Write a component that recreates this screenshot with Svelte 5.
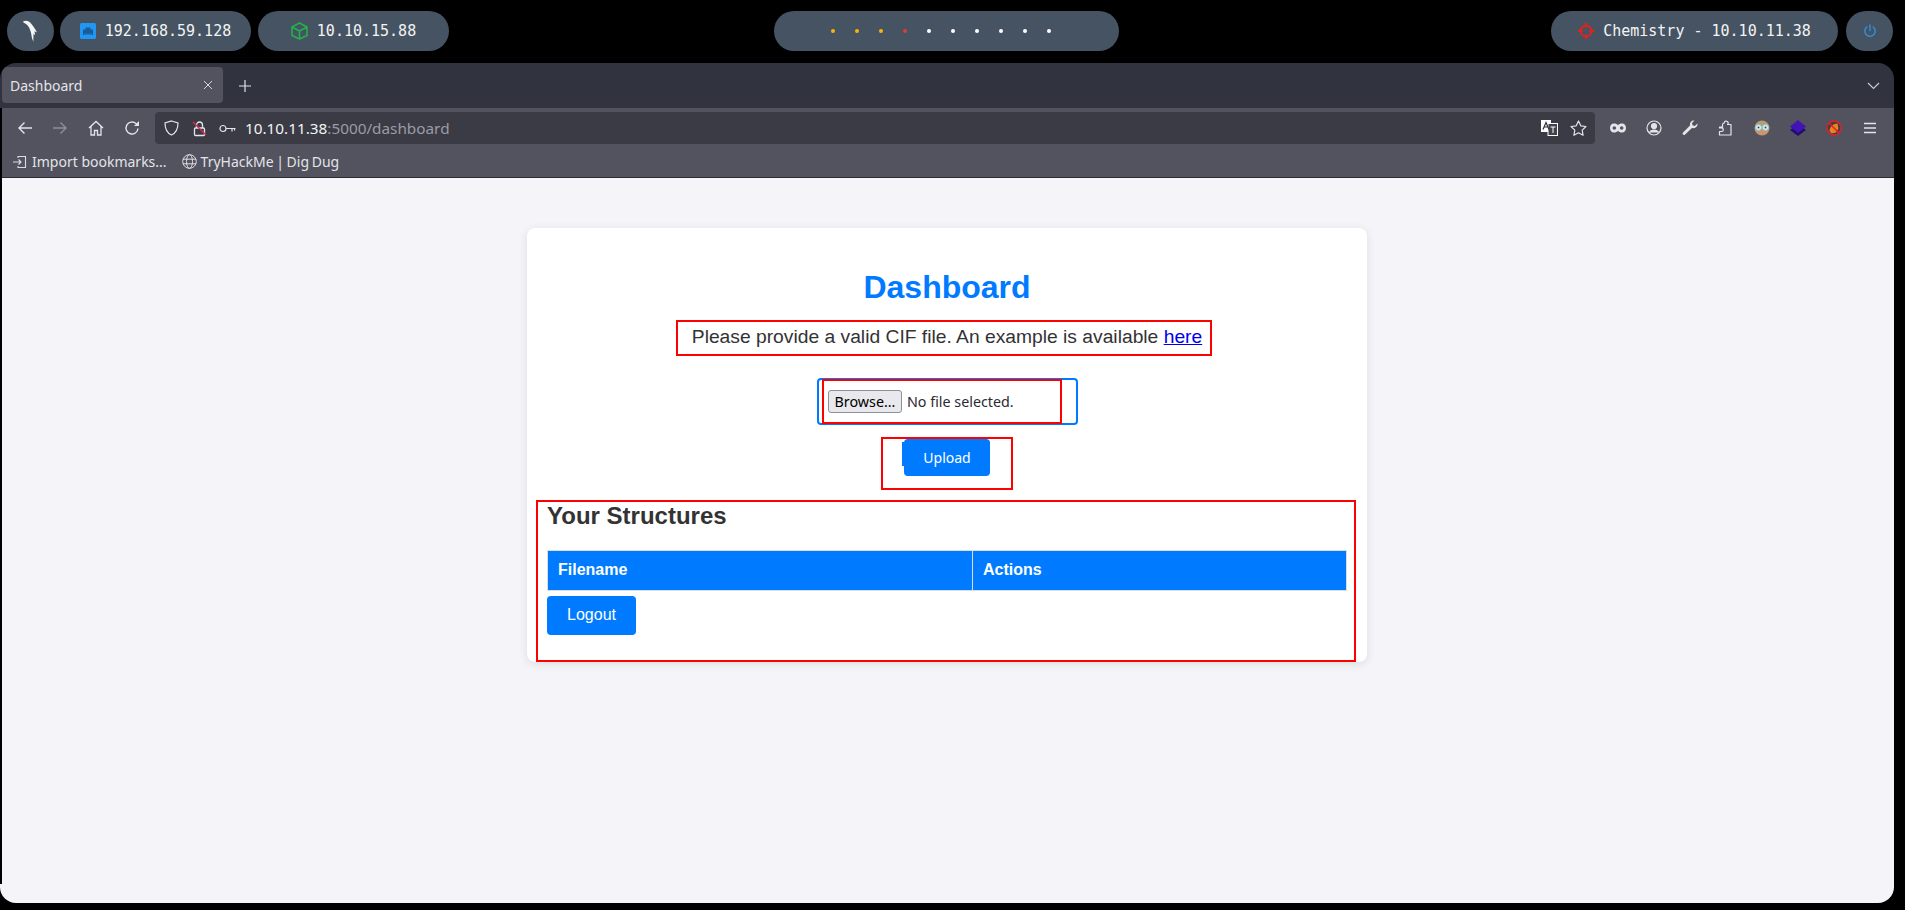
<script>
	const dots = ['#f5b800', '#f5b800', '#f5b800', '#e53935', '#fff', '#fff', '#fff', '#fff', '#fff', '#fff'];
</script>

<div class="desktop">
	<div class="topbar">
		<div class="group">
			<div class="pill logo">
				<svg width="18" height="24" viewBox="0 0 18 24"><path d="M1 2.500C4 .8 7.500 2 9.500 5c1.800 2.700 4.500 6 5.500 8.500l-2.500-1.200.5 4-1.500-1.500-.2 8-1.300-3.500-1-5.500C8 10 6.500 6.500 4 5 3 4.400 1.500 4 1 2.500z" fill="#f4f5f6" /></svg>
			</div>
			<div class="pill ip">
				<svg width="16" height="16" viewBox="0 0 16 16"><rect width="16" height="16" rx="1.500" fill="#2196f3" /><path d="M3 12V6.500h2.500V4.500h5v2H13V12z" fill="#1a5a96" /><path d="M4.500 10.500h1v1.500h-1zM6.500 10.500h1v1.500h-1zM8.500 10.500h1v1.500h-1zM10.500 10.500h1v1.500h-1z" fill="#2196f3" /></svg>
				<span>192.168.59.128</span>
			</div>
			<div class="pill ip">
				<svg width="17" height="18" viewBox="0 0 17 18" fill="none" stroke="#22b14c" stroke-width="1.600" stroke-linejoin="round"><path d="M8.500 1 16 5v8.500L8.500 17 1 13.500V5zM1 5l7.500 4L16 5M8.500 9v8" /></svg>
				<span>10.10.15.88</span>
			</div>
		</div>
		<div class="pill center">
			{#each dots as color}
				<i class="dot" style="background:{color}"></i>
			{/each}
		</div>
		<div class="group">
			<div class="pill target">
				<svg width="16" height="16" viewBox="0 0 16 16" fill="none" stroke="#e8201a" stroke-width="1.800"><circle cx="8" cy="8" r="5.500" /><path d="M8 0v4.500M8 11.500V16M0 8h4.500M11.500 8H16" /></svg>
				<span>Chemistry - 10.10.11.38</span>
			</div>
			<div class="pill power">
				<svg width="14" height="14" viewBox="0 0 14 14" fill="none" stroke="#2f95e8" stroke-width="1.300" stroke-linecap="round"><path d="M7 1v5.500M3.800 3a5.200 5.200 0 1 0 6.400 0" /></svg>
			</div>
		</div>
	</div>

	<div class="browser">
		<div class="tabs">
			<div class="tab">
				<span>Dashboard</span>
				<svg width="10" height="10" viewBox="0 0 10 10" stroke="#d5d6db" stroke-width="1"><path d="M1 1l8 8M9 1l-8 8" /></svg>
			</div>
			<svg class="newtab" width="12" height="12" viewBox="0 0 12 12" stroke="#e2e3e7" stroke-width="1.200"><path d="M6 0v12M0 6h12" /></svg>
			<svg class="chev" width="13" height="8" viewBox="0 0 13 8" fill="none" stroke="#c8c9d0" stroke-width="1.200"><path d="M1 1l5.500 5.500L12 1" /></svg>
		</div>

		<div class="nav">
			<svg class="ic" viewBox="0 0 16 16" fill="none" stroke="#e4e5e9" stroke-width="1.400"><path d="M15 8H2M7.500 2.500 2 8l5.500 5.500" /></svg>
			<svg class="ic" viewBox="0 0 16 16" fill="none" stroke="#8d8e98" stroke-width="1.400"><path d="M1 8h13M8.500 2.500 14 8l-5.500 5.500" /></svg>
			<svg class="ic" viewBox="0 0 16 16" fill="none" stroke="#e4e5e9" stroke-width="1.300"><path d="M1 8l7-6.500L15 8M3 6.500V15h3.500v-4.500h3V15H13V6.500" /></svg>
			<svg class="ic" viewBox="0 0 16 16" fill="none" stroke="#e4e5e9" stroke-width="1.400"><path d="M14 8.500A6 6 0 1 1 12 3.500L14.500 5.500" /><path d="M15 1v5h-5" fill="#e4e5e9" stroke="none" /></svg>
			<div class="urlbar">
				<svg width="15" height="16" viewBox="0 0 15 16" fill="none" stroke="#e4e5e9" stroke-width="1.200"><path d="M7.500 1 14 3c0 6-2 10-6.500 12C3 13 1 9 1 3z" /></svg>
				<svg class="u2" width="15" height="17" viewBox="0 0 15 17" fill="none"><path d="M4.500 8V5a3 3 0 0 1 6 0v3" stroke="#e4e5e9" stroke-width="1.300" /><rect x="2.500" y="8" width="10" height="7.500" rx="1" stroke="#e4e5e9" stroke-width="1.300" /><path d="M1 2l13 13" stroke="#e22850" stroke-width="1.300" /></svg>
				<svg class="u3" width="17" height="9" viewBox="0 0 17 9" fill="none" stroke="#e4e5e9" stroke-width="1.200"><circle cx="4" cy="4.500" r="3" /><path d="M7 4.500h9.500M13 4.500v3M15.500 4.500v2" /></svg>
				<span class="url"><b>10.10.11.38</b>:5000/dashboard</span>
				<svg class="u4" width="17" height="16" viewBox="0 0 17 16"><rect x="0" y="0" width="10" height="12" fill="#fff" /><rect x="7" y="3.500" width="9.500" height="12" fill="#42434d" stroke="#fff" stroke-width="1" /><path d="M2 9.500 5 2.500l3 7M3.200 7h3.600" fill="none" stroke="#33343c" stroke-width="1.200" /><path d="M9.500 7h5M12 7v6" stroke="#fff" stroke-width="1" /></svg>
				<svg class="u5" width="17" height="16" viewBox="0 0 17 16" fill="none" stroke="#e4e5e9" stroke-width="1.200" stroke-linejoin="round"><path d="M8.500 1l2.300 4.800 5.200.7-3.800 3.600.9 5.200-4.600-2.500-4.600 2.500.9-5.200L1 6.500l5.200-.7z" /></svg>
			</div>
			<div class="exts">
				<svg class="ic" viewBox="0 0 16 16"><path d="M4 3.500c1.800 0 3 .7 4 1.500 1-.8 2.200-1.500 4-1.500 2.500 0 4 2 4 4.500s-1.500 4.500-4 4.500c-1.800 0-3-.7-4-1.500-1 .8-2.200 1.500-4 1.500-2.500 0-4-2-4-4.500s1.500-4.500 4-4.500z" fill="#e4e5e9" /><circle cx="4.300" cy="8" r="1.800" fill="#52535e" /><circle cx="11.700" cy="8" r="1.800" fill="#52535e" /></svg>
				<svg class="ic" viewBox="0 0 16 16" fill="none" stroke="#e4e5e9" stroke-width="1.200"><circle cx="8" cy="8" r="7" /><circle cx="8" cy="6" r="2.500" fill="#e4e5e9" /><path d="M3.500 12.500c1-2 3-2.500 4.500-2.500s3.500.5 4.500 2.500" fill="#e4e5e9" /></svg>
				<svg class="ic" viewBox="0 0 16 16" fill="#e4e5e9"><path d="M15.500 3.500 12.800 6 10.500 5.300 10 3l2.500-2.500C9.500-.2 7.500 2.500 8 5.500L.8 12.800c-.8 1 .8 2.700 2 2L10 8c3 .8 6-1.500 5.500-4.500z" /></svg>
				<svg class="ic" viewBox="0 0 16 16" fill="none" stroke="#e4e5e9" stroke-width="1.200" stroke-linejoin="round"><path d="M1.500 7h3V4.500A1.800 1.800 0 0 1 6.300 3V3A1.800 1.800 0 0 1 8 1l.8.3A1.800 1.800 0 0 1 9.500 4.500h3.500V15H1.500v-3.500h2a1.800 1.800 0 0 0 0-3.600h-2z" /></svg>
				<svg class="ic" viewBox="0 0 16 16"><circle cx="8" cy="8" r="7.500" fill="#c9966e" /><path d="M1.500 5.500C3 1 13 1 14.500 5.500z" fill="#a8a27a" /><circle cx="4.500" cy="7.500" r="3" fill="#d9f0f2" stroke="#8fc7cf" /><circle cx="11.500" cy="7.500" r="3" fill="#d9f0f2" stroke="#8fc7cf" /><circle cx="4.500" cy="7.500" r="1" fill="#445" /><circle cx="11.500" cy="7.500" r="1" fill="#445" /></svg>
				<svg class="ic" viewBox="0 0 16 16"><path d="M8 4 16 10l-8 6-8-6z" fill="#1e0f70" /><path d="M8 0l8 6.500L8 13 0 6.500z" fill="#4314b4" /></svg>
				<svg class="ic" viewBox="0 0 16 16"><circle cx="8" cy="8" r="7" fill="#4a3a3e" stroke="#e02030" stroke-width="1.400" /><path d="M3.500 11c0-4 3-7 8-7.500l1 5-2.500 4-4.500 1z" fill="#e8831c" /><path d="M3 3l10 10" stroke="#e02030" stroke-width="1.400" /></svg>
				<svg class="ic" viewBox="0 0 16 16" stroke="#e4e5e9" stroke-width="1.300"><path d="M2 3.500h12M2 8h12M2 12.500h12" /></svg>
			</div>
		</div>

		<div class="bookmarks">
			<div class="bm">
				<svg width="14" height="14" viewBox="0 0 14 14" fill="none" stroke="#dcdde2" stroke-width="1.100"><path d="M5 3V1.500h7.500v11H5V11M0 7h8M5.500 4.500 8 7l-2.500 2.500" /></svg>
				<span>Import bookmarks...</span>
			</div>
			<div class="bm second">
				<svg width="15" height="15" viewBox="0 0 15 15" fill="none" stroke="#dcdde2" stroke-width="1"><circle cx="7.500" cy="7.500" r="6.800" /><ellipse cx="7.500" cy="7.500" rx="3" ry="6.800" /><path d="M1 5.200h13M1 9.800h13" /></svg>
				<span>TryHackMe | Dig Dug</span>
			</div>
		</div>

		<main class="page">
			<section class="card">
				<h1>Dashboard</h1>
				<p class="intro">Please provide a valid CIF file. An example is available <a href="#here">here</a></p>
				<form class="upload" onsubmit={(e) => e.preventDefault()}>
					<div class="file">
						<button type="button" class="browse">Browse...</button>
						<span>No file selected.</span>
					</div>
					<button class="primary small" type="submit">Upload</button>
				</form>
				<h2>Your Structures</h2>
				<table>
					<thead>
						<tr><th class="c1">Filename</th><th>Actions</th></tr>
					</thead>
				</table>
				<button class="primary logout" type="button">Logout</button>
				<span class="mark m1"></span>
				<span class="mark m2"></span>
				<span class="mark m3"></span>
				<span class="mark m4"></span>
				<span class="tick"></span>
			</section>
		</main>
	</div>
</div>

<style>
	:global(body) { background: #000; }
	.desktop {
		width: 1905px; height: 910px; background: #000; overflow: hidden;
		display: flex; flex-direction: column;
	}

	.topbar {
		display: flex; justify-content: space-between; align-items: center;
		height: 40px; margin: 11px 12px 12px 7px; flex: none;
	}
	.group { display: flex; gap: 6px; }
	.group:last-child { gap: 8px; }
	.pill {
		height: 40px; background: #465362; border-radius: 20px;
		display: flex; align-items: center; justify-content: center;
		color: #f2f3f4;
		font-family: "DejaVu Sans Mono", monospace; font-size: 15px;
	}
	.logo { width: 47px; }
	.ip { width: 191px; gap: 9px; }
	.ip + .ip { margin-left: 1px; }
	.center { width: 345px; gap: 20px; position: absolute; left: 774px; top: 11px; padding-right: 11px; box-sizing: border-box; }
	.dot { width: 4px; height: 4px; border-radius: 50%; }
	.target { width: 287px; gap: 9px; }
	.power { width: 47px; }

	.browser {
		flex: 1; margin: 0 11px 7px 0;
		border-radius: 16px; overflow: hidden;
		display: flex; flex-direction: column;
		background: #000;
	}
	.tabs {
		height: 45px; background: #31343f; flex: none;
		display: flex; align-items: center; padding-left: 2px;
	}
	.tab {
		width: 221px; height: 36px; box-sizing: border-box; background: #52535e;
		border-radius: 4px; margin-bottom: 1px;
		display: flex; align-items: center; justify-content: space-between;
		padding: 0 10px 0 8px;
		color: #e3e4e8; font-family: "Noto Sans", sans-serif; font-size: 14px;
	}
	.newtab { margin: 0 0 0 16px; }
	.chev { margin: 0 14px 0 auto; }

	.nav {
		height: 40px; flex: none; padding-left: 14.500px;
		display: flex; align-items: center; margin-left: 2px;
		background: #52535e;
	}
	.ic { width: 16px; height: 16px; flex: none; margin-right: 19.800px; }
	.urlbar {
		width: 1440px; height: 32px; margin-left: -4.700px; flex: none;
		background: #3a3b45; border-radius: 4px;
		display: flex; align-items: center; padding: 0 8px 0 9px; box-sizing: border-box;
	}
	.u2 { margin-left: 12.500px; }
	.u3 { margin-left: 12.500px; }
	.url {
		margin-left: 9px; color: #9b9ca4;
		font-family: "Noto Sans", sans-serif; font-size: 15.300px;
	}
	.url b { font-weight: 400; color: #f2f3f5; }
	.u4 { margin-left: auto; }
	.u5 { margin-left: 12px; }
	.exts { display: flex; align-items: center; margin-left: 15px; }
	.exts .ic { margin-right: 20px; }

	.bookmarks {
		height: 30px; flex: none; display: flex; align-items: center;
		padding: 0 0 2px 11px; box-sizing: border-box; margin-left: 2px;
		background: #52535e; border-bottom: 1px solid #2a2b33;
		color: #e3e4e8; font-family: "Noto Sans", sans-serif; font-size: 14px;
	}
	.bm { display: flex; align-items: center; gap: 5px; }
	.second { gap: 4px; margin-left: 15px; word-spacing: -1px; }

	.page {
		position: relative; flex: 1; background: #f4f4f9;
		display: flex; justify-content: center; align-items: flex-start;
		padding-top: 50px; font-family: "Liberation Sans", Arial, sans-serif;
		color: #333;
	}
	.page::before {
		content: ""; position: absolute; left: 0; top: 0; bottom: 19px; width: 2px; background: #000;
	}
	.card {
		position: relative; width: 840px; height: 434px; box-sizing: border-box;
		padding: 20px 20px;
		background: #fff; border-radius: 8px;
		box-shadow: 0 2px 10px rgba(0, 0, 0, 0.1);
		text-align: center;
	}
	h1 {
		margin: 21px 0 0; font-size: 32px; line-height: 37px; color: #007bff; font-weight: 700;
	}
	.intro { margin: 20px 0 0; font-size: 19.250px; line-height: 22px; }
	.intro a { color: #0000ee; }

	.upload { display: flex; flex-direction: column; align-items: center; margin-top: 30px; }
	.file {
		width: 261px; height: 47px; box-sizing: border-box;
		border: 2px solid #007bff; border-radius: 4px;
		display: flex; align-items: center; gap: 5px; padding-left: 9px; margin-left: 1px;
		color: #2b2a33;
		font-family: "Noto Sans", sans-serif; font-size: 14.300px;
	}
	.browse {
		width: 74px; height: 23px; padding: 0; background: #e9e9ed;
		border: 1px solid #8f8f9d; border-radius: 3px; color: #000;
		font: inherit;
	}
	.primary {
		background: #007bff; color: #fff; border: 0; border-radius: 4px;
	}
	.small {
		width: 86px; height: 37px; margin-top: 14px;
		font-family: "Noto Sans", sans-serif; font-size: 14px;
	}
	h2 {
		margin: 25.500px 0 0; text-align: left;
		font-size: 24px; line-height: 28px; font-weight: 700;
	}
	table {
		width: 800px; margin-top: 20px; border-collapse: collapse; text-align: left;
	}
	th {
		height: 40px; padding: 0 10px; box-sizing: border-box;
		background: #007bff; color: #fff; font-size: 16px; font-weight: 700;
		border: 1px solid #ddd;
	}
	.c1 { width: 425px; }
	.logout {
		display: block; width: 89px; height: 39px; margin-top: 5px;
		font-family: "Liberation Sans", Arial, sans-serif; font-size: 16px;
	}

	.mark { position: absolute; border: 2px solid #f00; box-sizing: border-box; }
	.m1 { left: 149px; top: 92px; width: 536px; height: 36px; }
	.m2 { left: 295px; top: 151px; width: 240px; height: 45px; }
	.m3 { left: 354px; top: 209px; width: 132px; height: 53px; }
	.m4 { left: 9px; top: 272px; width: 820px; height: 162px; }
	.tick { position: absolute; left: 375px; top: 214px; width: 2px; height: 24px; background: #007bff; }
</style>
